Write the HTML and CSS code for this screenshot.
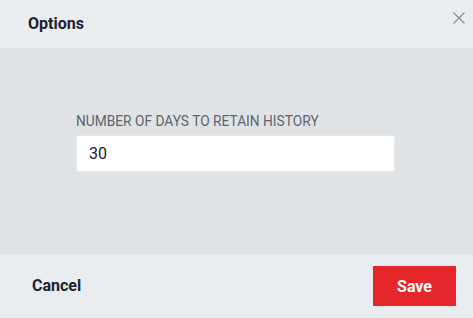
FILE: index.html
```html
<!DOCTYPE html>
<html>
<head>
<meta charset="utf-8">
<link rel="stylesheet" href="styles.css">
</head>
<body>
<div class="dialog">
  <header class="dialog-header">
    <h1 class="title">Options</h1>
    <button class="close" aria-label="Close">
      <svg width="12" height="12" viewBox="0 0 12 12"><path d="M0.5 0.5 L11.5 11.5 M11.5 0.5 L0.5 11.5" stroke="#8c9096" stroke-width="1.3" fill="none"/></svg>
    </button>
  </header>
  <main class="dialog-body">
    <div class="field">
      <label class="field-label">NUMBER OF DAYS TO RETAIN HISTORY</label>
      <div class="input">30</div>
    </div>
  </main>
  <footer class="dialog-footer">
    <button class="btn-cancel">Cancel</button>
    <button class="btn-save">Save</button>
  </footer>
</div>
</body>
</html>
```

FILE: styles.css
```css
html, body {
  margin: 0;
  padding: 0;
}
body {
  font-family: Roboto, "Liberation Sans", sans-serif;
  width: 473px;
  height: 318px;
  overflow: hidden;
}
.dialog {
  display: flex;
  flex-direction: column;
  height: 318px;
}
.dialog-header {
  height: 48px;
  background: #eaedf0;
  display: flex;
  align-items: flex-start;
  justify-content: space-between;
  padding: 0 8px 0 28px;
  box-sizing: border-box;
}
.title {
  margin: 14px 0 0;
  font-size: 16px;
  font-weight: 700;
  color: #1c2130;
  line-height: 20px;
}
.close {
  border: 0;
  background: none;
  padding: 0;
  width: 12px;
  height: 12px;
  display: flex;
  margin-top: 12px;
}
.dialog-body {
  flex: 1;
  background: #dfe3e6;
  display: flex;
  padding: 66px 78px 0 76px;
  box-sizing: border-box;
}
.field {
  flex: 1;
  display: flex;
  flex-direction: column;
}
.field-label {
  font-size: 13.75px;
  line-height: 15px;
  color: #5f646c;
  margin-bottom: 6px;
}
.input {
  height: 37px;
  background: #fff;
  border: 1px solid #e6e9ec;
  box-sizing: border-box;
  padding: 0 12px;
  display: flex;
  align-items: center;
  font-size: 16px;
  color: #1c2130;
}
.dialog-footer {
  height: 64px;
  background: #eaedf0;
  display: flex;
  align-items: center;
  justify-content: space-between;
  padding: 0 17px 0 32px;
  box-sizing: border-box;
}
.btn-cancel {
  border: 0;
  background: none;
  padding: 0;
  font-family: inherit;
  font-size: 16px;
  font-weight: 700;
  color: #1c2130;
  margin-top: -2px;
}
.btn-save {
  width: 83px;
  height: 40px;
  border: 0;
  background: #e5262a;
  color: #fff;
  font-family: inherit;
  font-size: 16px;
  font-weight: 700;
  padding: 0;
}
```
